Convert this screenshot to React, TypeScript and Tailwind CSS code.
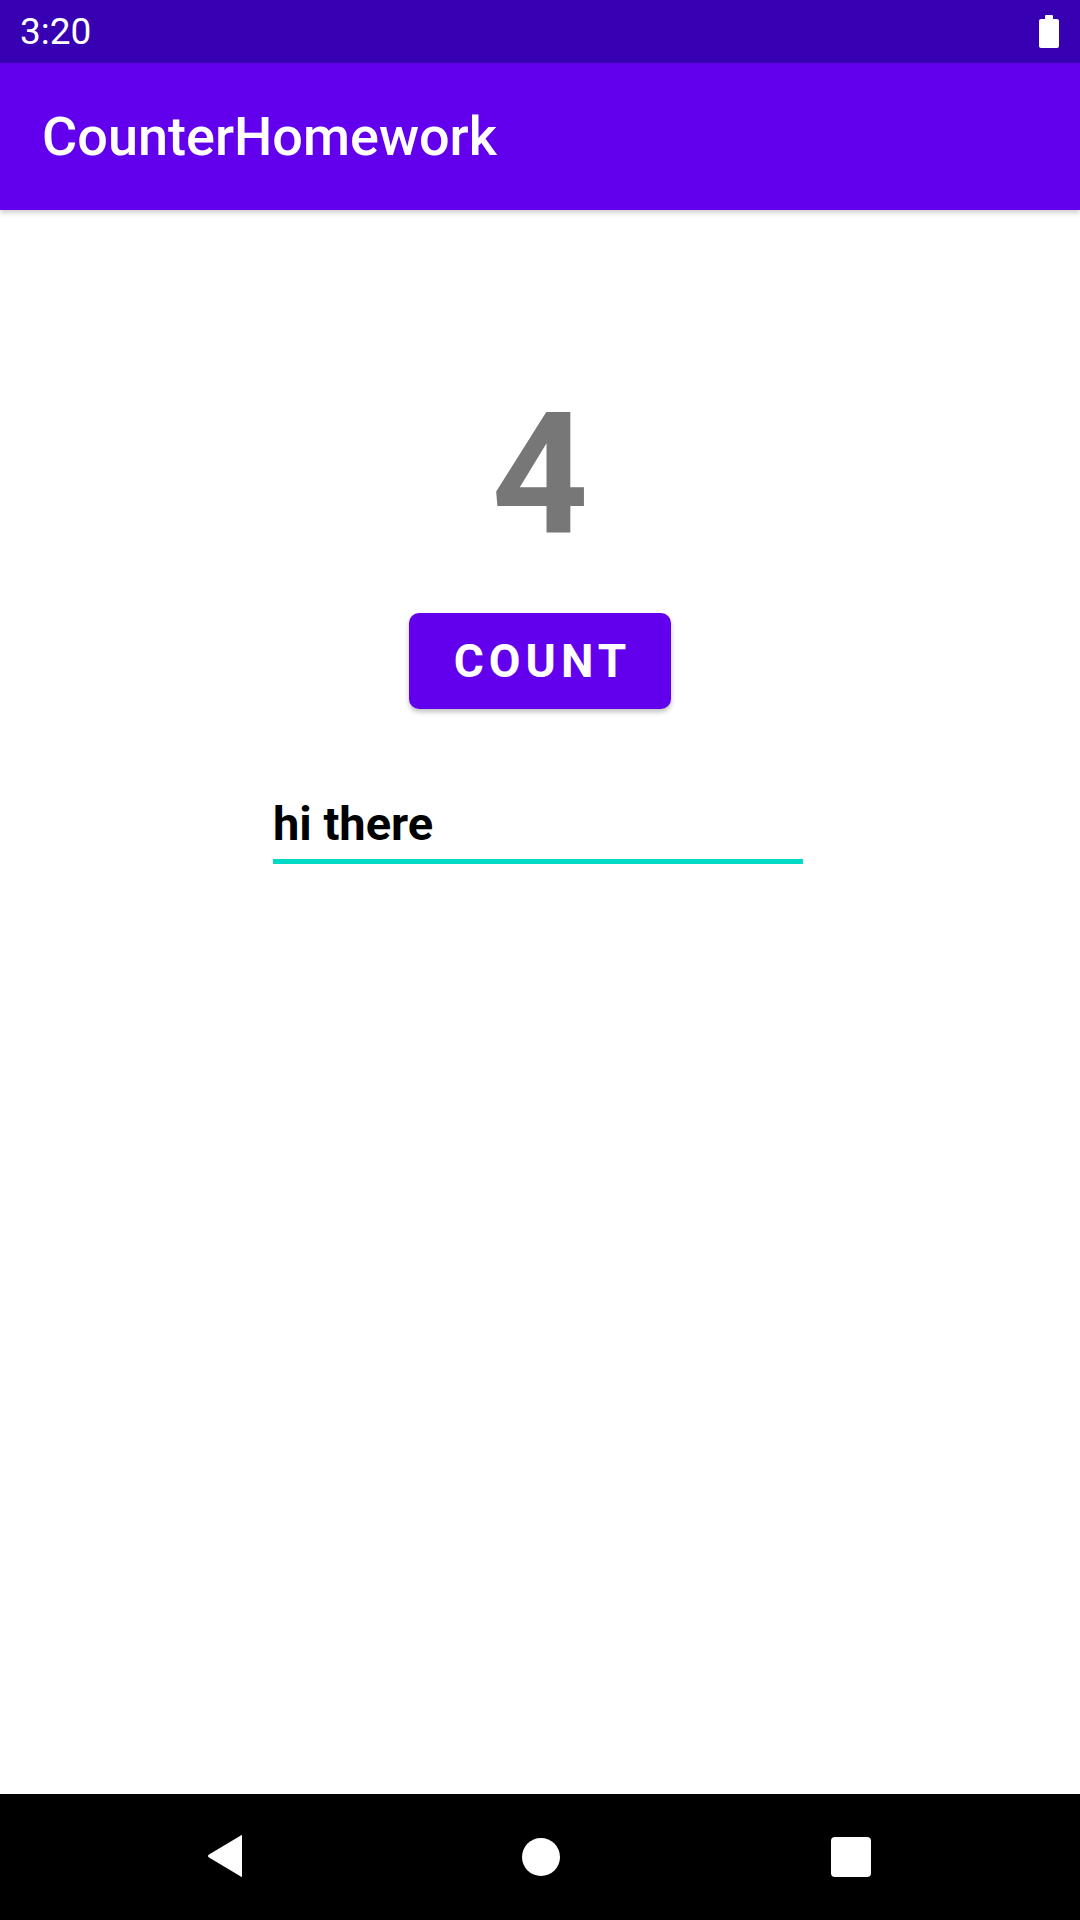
import React from "react";

export default function App() {
  return (
    <div className="w-[1080px] h-[1920px] flex flex-col bg-white overflow-hidden" style={{ fontFamily: "Roboto, 'Liberation Sans', sans-serif" }}>
      {/* Status bar */}
      <div className="h-[63px] bg-[#3700B3] flex items-center justify-between pl-[20px] pr-[21px] shrink-0">
        <span className="text-white text-[37px] leading-none font-normal">3:20</span>
        <div className="flex flex-col items-center">
          <div className="w-[8px] h-[4px] bg-white rounded-t-[1px]" />
          <div className="w-[20px] h-[29px] bg-white rounded-[2px]" />
        </div>
      </div>
      {/* App bar */}
      <div className="h-[147px] bg-[#6200EE] flex items-center pl-[42px] shrink-0 shadow-[0_3px_5px_rgba(0,0,0,0.18)] relative z-10">
        <span className="text-white text-[54px] font-medium leading-none mt-[1px]">CounterHomework</span>
      </div>
      {/* Content */}
      <div className="flex-1 flex flex-col items-center">
        <div className="mt-[180px] text-[169px] font-bold leading-none text-[#777777]">4</div>
        <button className="mt-[54px] w-[262px] h-[96px] bg-[#6200EE] rounded-[10px] shadow-[0_3px_5px_rgba(0,0,0,0.25)] flex items-center justify-center text-white text-[46px] font-bold tracking-[0.11em] pl-[5px]">
          COUNT
        </button>
        <div className="mt-[91px] w-[530px] ml-[-4px] flex flex-col">
          <span className="text-[47px] font-bold leading-none text-black">hi there</span>
          <div className="mt-[12px] h-[5px] bg-[#03DAC5]" />
        </div>
      </div>
      {/* Nav bar */}
      <div className="h-[126px] bg-black flex items-center shrink-0 relative">
        <svg className="absolute left-[206px] top-[40px]" width="40" height="44" viewBox="0 0 40 44">
          <path d="M36 2 L36 42 Q36 44 34 42 L3 23.5 Q1 22 3 20.5 L34 2 Q36 0 36 2 Z" fill="white" />
        </svg>
        <div className="absolute left-[522px] top-[44px] w-[38px] h-[38px] rounded-full bg-white" />
        <div className="absolute left-[831px] top-[43px] w-[40px] h-[40px] rounded-[4px] bg-white" />
      </div>
    </div>
  );
}
